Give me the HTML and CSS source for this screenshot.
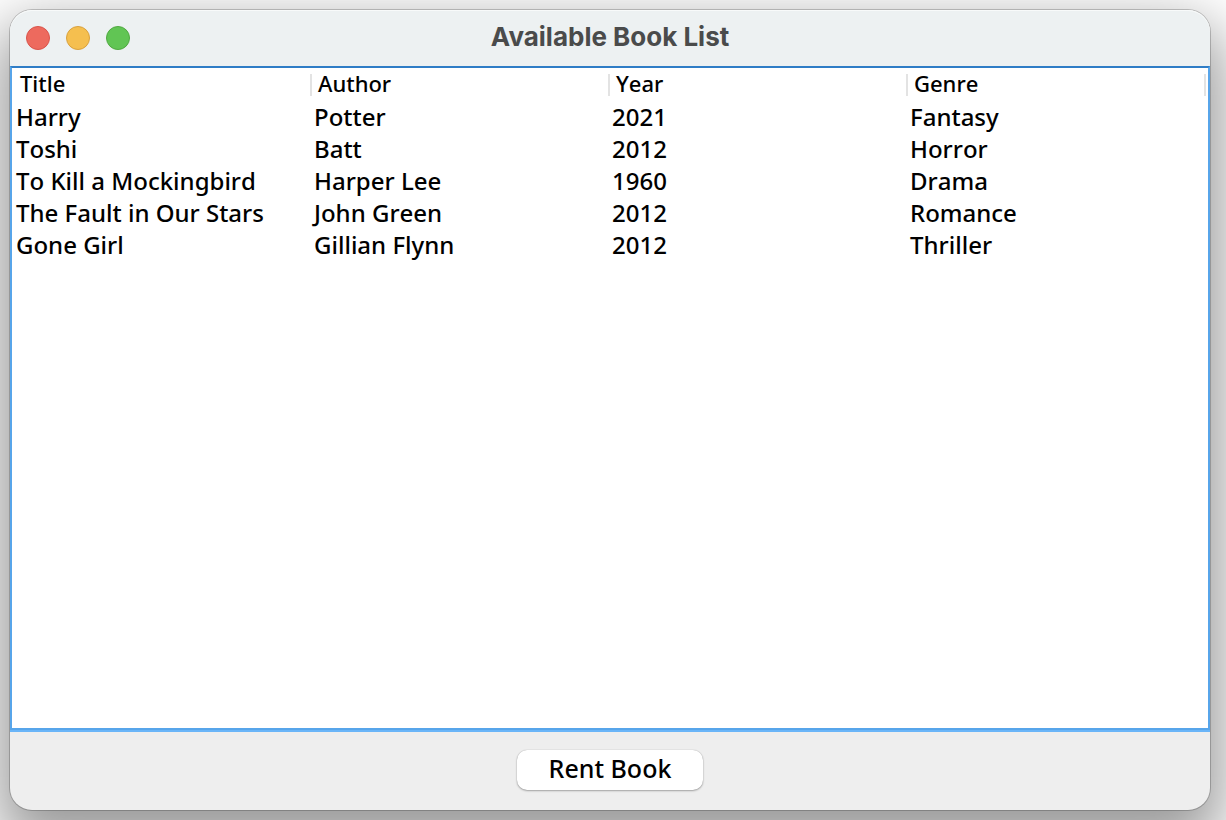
FILE: index.html
```html
<!DOCTYPE html>
<html lang="en">
<head>
<meta charset="utf-8">
<title>Available Book List</title>
<link rel="stylesheet" href="styles.css">
</head>
<body>
<main class="window">
  <header class="titlebar">
    <div class="controls">
      <button class="dot dot-close" type="button" aria-label="Close"></button>
      <button class="dot dot-minimize" type="button" aria-label="Minimize"></button>
      <button class="dot dot-zoom" type="button" aria-label="Zoom"></button>
    </div>
    <h1 class="title">Available Book List</h1>
  </header>
  <section class="list">
    <table class="books">
      <thead>
        <tr><th scope="col">Title</th><th scope="col">Author</th><th scope="col">Year</th><th scope="col">Genre</th></tr>
      </thead>
      <tbody>
        <tr><td>Harry</td><td>Potter</td><td>2021</td><td>Fantasy</td></tr>
        <tr><td>Toshi</td><td>Batt</td><td>2012</td><td>Horror</td></tr>
        <tr><td>To Kill a Mockingbird</td><td>Harper Lee</td><td>1960</td><td>Drama</td></tr>
        <tr><td>The Fault in Our Stars</td><td>John Green</td><td>2012</td><td>Romance</td></tr>
        <tr><td>Gone Girl</td><td>Gillian Flynn</td><td>2012</td><td>Thriller</td></tr>
      </tbody>
    </table>
  </section>
  <footer class="actions">
    <button class="rent" type="button">Rent Book</button>
  </footer>
</main>
</body>
</html>
```
FILE: styles.css
```css
* {
  box-sizing: border-box;
}

body {
  display: flex;
  height: 100vh;
  margin: 0;
  padding: 10px 16px 10px 10px;
  overflow: hidden;
  background: #ffffff;
  color: #000000;
  font-family: "Noto Sans", "Open Sans", sans-serif;
  font-kerning: none;
}

.window {
  display: flex;
  flex: 1;
  flex-direction: column;
  border-radius: 22px;
  background: #eeeeee;
  box-shadow: 0 0 0 1px rgba(0, 0, 0, 0.2), 0 26px 60px 12px rgba(0, 0, 0, 0.4);
}

.titlebar {
  display: grid;
  grid-template-columns: 1fr auto 1fr;
  align-items: center;
  height: 56px;
  padding: 0 16px;
  border-radius: 22px 22px 0 0;
  background: #edf1f2;
  box-shadow: inset 0 1px 0 #f8fafa;
}

.controls {
  display: flex;
  gap: 16px;
}

.dot {
  width: 24px;
  height: 24px;
  padding: 0;
  border: 1px solid;
  border-radius: 50%;
}

.dot-close {
  border-color: #d9544b;
  background: #ed6a5e;
}

.dot-minimize {
  border-color: #d9a13e;
  background: #f5bf4f;
}

.dot-zoom {
  border-color: #50a941;
  background: #61c554;
}

.title {
  margin: 0;
  padding-bottom: 2px;
  color: #4a4b4b;
  font: 700 26px/52px Inter, sans-serif;
}

.list {
  flex: 1;
  padding-right: 4px;
  border: 2px solid #57a5ea;
  border-top-color: #2f7dc6;
  background: #ffffff;
}

.books {
  width: 100%;
  border-spacing: 0;
  table-layout: fixed;
}

.books th {
  position: relative;
  height: 34px;
  padding: 0 8px 4px;
  font-size: 22px;
  font-weight: 500;
  line-height: 30px;
  text-align: left;
}

.books th::after {
  position: absolute;
  top: 6px;
  left: 100%;
  width: 2px;
  height: 22px;
  background: #e3e3e3;
  content: "";
}

.books td {
  height: 32px;
  padding: 0 4px 2px;
  font-size: 24px;
  font-weight: 500;
  line-height: 30px;
  white-space: nowrap;
}

.actions {
  display: flex;
  justify-content: center;
  padding: 18px 0 20px;
  border-top: 2px solid #6ab5f8;
}

.rent {
  height: 40px;
  padding: 0 32px 4px;
  border: 0;
  border-radius: 10px;
  background: #ffffff;
  box-shadow: 0 0 1px rgba(0, 0, 0, 0.3), 0 1px 2px rgba(0, 0, 0, 0.3);
  color: #000000;
  font: 500 25px/36px "Noto Sans", "Open Sans", sans-serif;
}
```
